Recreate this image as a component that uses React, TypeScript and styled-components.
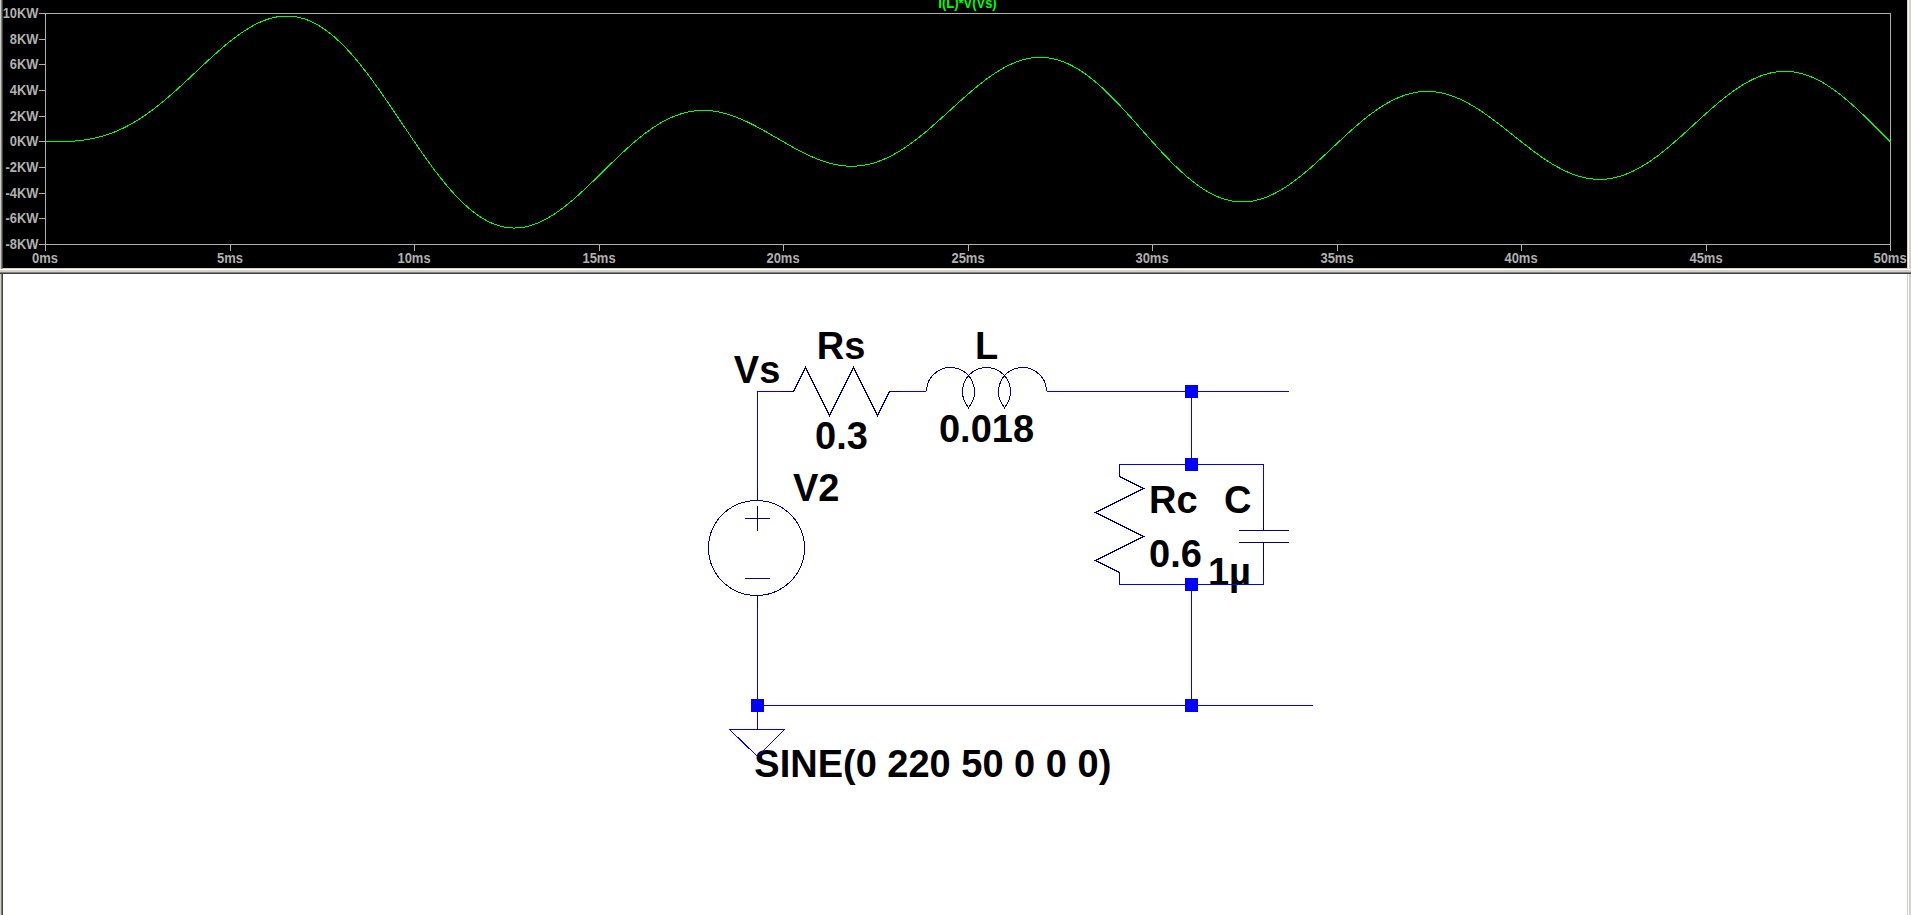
import React from "react";
import styled, { createGlobalStyle } from "styled-components";

const WIRE = "#0000ff";
const SYMBOL = "#000080";
const AXIS = "#b0b0b0";

const GlobalStyle = createGlobalStyle`
  html, body { margin: 0; padding: 0; background: #ffffff; overflow: hidden; }
`;

const Workspace = styled.main`
  display: flex;
  flex-direction: column;
  width: 1911px;
  height: 915px;
  overflow: hidden;
  background: #d4d0c8;
  font-family: "Liberation Sans", Arial, sans-serif;
`;

const Pane = styled.section<{ $height: number; $background: string }>`
  box-sizing: border-box;
  flex: none;
  height: ${(p) => p.$height}px;
  background: ${(p) => p.$background};
  border-left: 1px solid #808080;
  border-right: 1px solid #ffffff;
  margin: 0 2px 0 1px;
`;

const PaneInner = styled.div<{ $closed?: boolean }>`
  box-sizing: border-box;
  height: 100%;
  border-left: 1px solid #404040;
  border-right: 1px solid #d4d0c8;
  border-bottom: ${(p) => (p.$closed ? "1px solid #d4d0c8" : "0")};
  overflow: hidden;
`;

const Splitter = styled.div`
  flex: none;
  height: 5px;
  box-sizing: border-box;
  border-top: 1px solid #ffffff;
  border-bottom: 1px solid #404040;
  background: linear-gradient(#d4d0c8 0 2px, #808080 2px 3px);
`;

const Drawing = styled.svg`
  display: block;
  width: 100%;
  height: 100%;
`;

const Lines = styled.g<{ $color: string }>`
  fill: none;
  stroke: ${(p) => p.$color};
  stroke-width: 1;
  shape-rendering: crispEdges;
`;

const AxisLabel = styled.text<{ $color?: string }>`
  fill: ${(p) => p.$color ?? AXIS};
  font-size: 14.5px;
  font-weight: bold;
`;

const PartLabel = styled.text`
  fill: #000000;
  font-size: 38px;
  font-weight: bold;
`;

const Node = styled.rect`
  fill: ${WIRE};
  shape-rendering: crispEdges;
`;

const X_TICKS = [45, 230, 414, 599, 783, 968, 1152, 1337, 1521, 1706, 1890];
const Y_TICKS = [13, 39, 64, 90, 116, 141, 167, 193, 218, 244];

// Instantaneous source power of the series R-L circuit driven by SINE(0 220 50).
function power(t: number) {
  const r = 0.9;
  const l = 0.018;
  const w = 2 * Math.PI * 50;
  const z = Math.hypot(r, w * l);
  const phi = Math.atan2(w * l, r);
  const i = (220 / z) * (Math.sin(w * t - phi) + Math.sin(phi) * Math.exp((-t * r) / l));
  return i * 220 * Math.sin(w * t);
}

const SAMPLES = 410;
const trace = Array.from({ length: SAMPLES + 1 }, (_, n) => {
  const x = 45 + (n / SAMPLES) * 1845;
  const y = 141.9 - (power((n / SAMPLES) * 0.05) / 2000) * 25.67;
  return `${x + 0.5},${y.toFixed(2)}`;
}).join(" ");

function Waveform() {
  return (
    <Drawing viewBox="3 0 1904 268">
      <AxisLabel transform="translate(967.5 8) scale(0.895 1)" textAnchor="middle" $color="#00ff00">I(L)*V(Vs)</AxisLabel>
      <Lines $color={AXIS}>
        <rect x={45.5} y={13.5} width={1845} height={231} />
        {Y_TICKS.map((y) => <path key={y} d={`M39 ${y + 0.5}H45`} />)}
        {X_TICKS.map((x) => <path key={x} d={`M${x + 0.5} 245V251`} />)}
      </Lines>
      {Y_TICKS.map((y, i) => (
        <AxisLabel key={y} transform={`translate(38.5 ${y + 5}) scale(0.89 1)`} textAnchor="end">{`${10 - 2 * i}KW`}</AxisLabel>
      ))}
      {X_TICKS.map((x, i) => (
        <AxisLabel key={x} transform={`translate(${x} 263) scale(0.895 1)`} textAnchor="middle">{`${5 * i}ms`}</AxisLabel>
      ))}
      <Lines $color="#00ff00"><polyline points={trace} /></Lines>
    </Drawing>
  );
}

const PARTS: { text: string; x: number; y: number; anchor?: "start" | "middle" | "end" }[] = [
  { text: "Vs", x: 733.8, y: 383 },
  { text: "Rs", x: 841, y: 359, anchor: "middle" },
  { text: "0.3", x: 841.5, y: 449, anchor: "middle" },
  { text: "L", x: 986.5, y: 359, anchor: "middle" },
  { text: "0.018", x: 986.5, y: 442, anchor: "middle" },
  { text: "V2", x: 793, y: 501 },
  { text: "Rc", x: 1149, y: 513 },
  { text: "C", x: 1251.5, y: 513, anchor: "end" },
  { text: "0.6", x: 1149, y: 567 },
  { text: "1µ", x: 1251, y: 585, anchor: "end" },
  { text: "SINE(0 220 50 0 0 0)", x: 754.3, y: 777 },
];

const NODES = [[1191, 391], [1191, 464], [1191, 584], [1191, 705], [757, 705]];

function Schematic() {
  return (
    <Drawing viewBox="3 274 1904 641">
      {PARTS.map((p) => (
        <PartLabel key={p.text} x={p.x} y={p.y} textAnchor={p.anchor ?? "start"}>{p.text}</PartLabel>
      ))}
      <Lines $color={WIRE}>
        <path d="M757.5 489V391.5H782M901 391.5H926M1047 391.5H1289" />
        <path d="M1191.5 391V464M1119 464.5H1263.5V489M1119 584.5H1263.5V566M1191.5 584V705" />
        <path d="M757.5 607V729M757 705.5H1313" />
        <path d="M729 729.5H785M729.5 729.5L757.5 756.5L784.5 729.5" />
      </Lines>
      <Lines $color={SYMBOL}>
        <path d="M782 391.5H793.5L805.5 367.5L829.5 415.5L853.5 367.5L877.5 415.5L889.5 391.5H901" />
        <path d="M926.5 391.5A24 24 0 1 1 968.5 407.4V408.5V407.4A24 24 0 1 1 1004.5 407.4V408.5V407.4A24 24 0 1 1 1046.5 391.5" />
        <path d="M1119.5 465V476.5L1143.5 488.5L1095.5 512.5L1143.5 536.5L1095.5 560.5L1119.5 572.5V584" />
        <path d="M1263.5 489V530.5M1239 530.5H1289M1239 542.5H1289M1263.5 542.5V572" />
        <ellipse cx={756.5} cy={548} rx={48} ry={47.5} />
        <path d="M757.5 489V500M757.5 596V607M745 518.5H770M757.5 506V531M745 578.5H770" />
      </Lines>
      {NODES.map(([x, y]) => <Node key={`${x}-${y}`} x={x - 6} y={y - 6} width={13} height={13} />)}
    </Drawing>
  );
}

export default function App() {
  return (
    <>
      <GlobalStyle />
      <Workspace>
        <Pane $height={269} $background="#000000">
          <PaneInner $closed><Waveform /></PaneInner>
        </Pane>
        <Splitter />
        <Pane $height={641} $background="#ffffff">
          <PaneInner><Schematic /></PaneInner>
        </Pane>
      </Workspace>
    </>
  );
}
